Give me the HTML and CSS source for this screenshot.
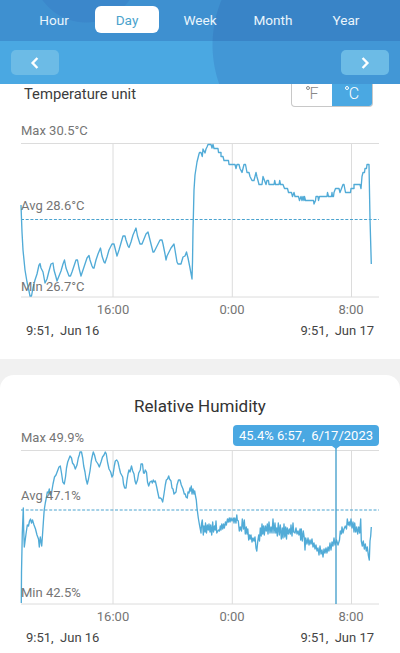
FILE: index.html
```html
<!DOCTYPE html>
<html lang="en">
<head>
    <meta charset="UTF-8">
    <meta name="viewport" content="width=device-width, initial-scale=1.0">
    <title>Temperature and Humidity</title>
    <link rel="stylesheet" href="styles.css">
</head>
<body>

    <header class="header">
        <nav class="tabs">
            <a class="tab">Hour</a>
            <a class="tab active">Day</a>
            <a class="tab">Week</a>
            <a class="tab">Month</a>
            <a class="tab">Year</a>
        </nav>
        <div class="pager">
            <button class="pager-btn" aria-label="Previous">
                <svg width="10" height="12" viewBox="0 0 10 12"><path d="M7.4 1 2.6 6l4.8 5"/></svg>
            </button>
            <button class="pager-btn" aria-label="Next">
                <svg width="10" height="12" viewBox="0 0 10 12"><path d="M2.6 1 7.4 6l-4.8 5"/></svg>
            </button>
        </div>
    </header>

    <section class="card temperature">
        <div class="unit-row">
            <span class="unit-label">Temperature unit</span>
            <div class="unit-switch">
                <span class="unit"><i class="degree"></i>F</span>
                <span class="unit selected"><i class="degree"></i>C</span>
            </div>
        </div>
        <div class="chart">
            <span class="max">Max 30.5°C</span>
            <svg class="plot" width="400" height="156" viewBox="0 143 400 156">
                <path class="grid" d="M21 143.5H379M21 297H379M113 143.5V297M232.3 143.5V297M351.5 143.5V297"/>
                <path class="avg-line" d="M21 219.5H379"/>
                <polyline class="line" points="21,205 21.5,219 22,232 23,250 25,270 27,282 29,291 30,296 31.5,296 33,288 35,280 37,274 39,265 40,263.5 41,268 43,272 45,283 47,279 49,271 51,264 53,263 54,270 56,277 57,281 59,276 61,271 63,264 64.5,260 66,268 69,276 70.5,276 72,272 74,266 76,260 77.5,260 79,268 81,276 83,270 85,264 87,258 89,255.5 90,260 92,266 93,268 94,268 96,260 98,254 100.5,248 102,256 104,262 105,263 107,257 109,250 112,244 114,244 116,252 117,256 119,250 121,243 123,236 125,236 126,240 128,246 129,247.5 131,242 133,235 136,228 137.5,236 140,244 142,244 144,239 146,234 148,232 149,236 151,244 153,252 154,252 156,248 158,244 160,240 162,240 163,244 165,254 166,260 167,256 169,252 171,248 174,244 175,250 177,262 178,264 181,264 183,257 185,256 186.5,252 188,258 190,268 192,279 192.5,262 193,230 193.3,219 194,190 195,175 197,162 199,154 199.5,152.5 201,152.5 202.3,156.5 203,149 205,153 206,149 207,147 208,144.5 211,144.5 212,148 213,144.5 214,148.5 218,148.5 218.5,152.5 221,152.5 221,156.5 223,156.5 224,160.5 228.5,160.5 229,164.5 235,164.5 236,168.5 237,164.5 239,164.5 240,168.5 242,172.5 244,164.5 245.5,164.5 247,172.5 249,172.5 250,176.5 252,180.5 254,180.5 256,172.5 257,177 258,180.5 259,184.5 262,184.5 263,176.5 264.5,180.5 266,184.5 267,180.5 268.5,180.5 269,184.5 274,184.5 274.7,180.5 275.5,184.5 279,184.5 279.7,180.5 280.5,184.5 283,184.5 284.5,188.5 287.5,188.5 288.5,192.5 291.5,192.5 292.5,196.5 294,192.5 295,196.5 298.5,196.5 299.5,200.5 301,196.5 302,200.5 303,196.5 304,200.5 304.5,196.5 305.5,200.5 313.5,200.5 314,204 315.5,200.5 316,196.5 318,196.5 318.5,200.5 319.5,196.5 327,196.5 327.5,192.5 328.5,196.5 331.5,196.5 332,192.5 332.5,196.5 333.5,196.5 334,192.5 335.5,188.5 339,188.5 340,192.5 341.5,188.5 343,184.5 344,184.5 345.5,192.5 350.5,192.5 351,188.5 354,188.5 354,184.5 360,184.5 361,188.5 362,176.5 363,172.5 364.5,172.5 365,168.5 366.5,168.5 367,164.5 369,164.5 370,219 371.3,264"/>
            </svg>
            <span class="avg">Avg 28.6°C</span>
            <span class="min">Min 26.7°C</span>
            <div class="ticks"><span>16:00</span><span>0:00</span><span>8:00</span></div>
            <div class="range"><span>9:51,&nbsp; Jun 16</span><span>9:51,&nbsp; Jun 17</span></div>
        </div>
    </section>

    <section class="card humidity">
        <h2>Relative Humidity</h2>
        <div class="chart">
            <span class="max">Max 49.9%</span>
            <svg class="plot" width="400" height="156" viewBox="0 450 400 156">
                <path class="grid" d="M21 450.5H379M21 604H379M113 450.5V604M232.3 450.5V604M351.5 450.5V604"/>
                <path class="avg-line" d="M21 510H379"/>
                <polyline class="line" points="21.3,603 21.5,573 22.3,533 23.3,508 23.7,530 24.3,547 26,534 27.3,525 28.5,526 29.5,521 30.5,519 31.5,523 32.5,520 34,525 35.5,529 37,535 38.5,539 39.3,547 40.3,537 41.7,546 42.5,535 43.3,523 44.2,510 45.3,503 46.3,498 47.3,492 48.3,493 49.3,489 50.3,495 51.5,493 53,484 54.5,477 56,475 57.5,471 59,467 60.3,466 61.5,473 62.8,482 64.3,484 65.5,477 66.5,468 67.7,462 68.5,460 70,456 71.5,458 72.5,463 74,465 75.3,469 77,465 78.3,458 79.3,455 80,452 81.5,452 82.7,458 83.7,466 85,472 86,479 87.3,484 88.5,479 90,471 91.3,461 92.3,456 93.3,452 94.5,455 96,461 98,464 99.3,467 101,462 102.5,457 104,455 105.3,452 106.3,454 107.5,462 109,469 110.7,472 112,477 113,475 114.3,466 115.3,461 116.7,460 118,462 119.3,468 120.5,473 122.7,477 123.5,484 124.7,488 126,488 127,480 128,474 129,470 130,472 131.5,466 132.7,471 134,474 135,481 136,484 137.5,480 138.7,473 140.3,470 141,464 142.5,464 143.5,473 144.5,473 145.3,470 146.5,472 147.5,482 148.7,486 150,482 151.5,481 152.3,483 153.3,480 154.3,482 155.3,481 156.7,487 157.7,492 159,498 160.5,498 161.5,499 162.7,502 164,494 165.3,485 166.3,480 167.5,479 168.7,476 169.5,479 171,481 172,488 173,489 174,494 176,492 177,485 178.5,480 180,480 181.3,485 183,489 184.3,494 185.3,494 186,497 187.3,498 188,492 189,493 190,488 190.5,491 191.3,486 192,494 193,489 194,494 194.7,491 195.5,496 196.3,500 197,508 198.3,518 199.5,525 201,533 201.5,524 202.3,520 203.3,535 204,526 205,532 205.5,523 206.5,533 207.3,525 208.3,530 209,524 210,532 210.7,525 211.7,535 212.7,522 213.5,532 214.5,526 215.3,530 216,521 216.8,533 218.5,530 219.5,531 220.3,526 221,530 221.8,524 222.7,529 223.5,524 224.3,528 225.5,522 226.3,525 227.5,519 228.3,522 229.3,518 230,522 231,518 232,521 233.3,518 234,523 234.8,518 236,523 236.8,515 237.3,520 238.3,521 239.3,531 240.3,527 241.5,531 242.3,519 243.5,529 244.3,520 245.3,534 246.3,527 247,534 247.8,529 248.7,540 249.5,535 250.3,539 251,535 252,542 253,538 254,541 255,537 256,548 256.8,551 257.8,541 258.7,535 259.5,541 260.3,528 261.2,536 262,524 262.7,534 263.5,526 264.3,535 265.3,526 266.3,531 267.3,524 268,534 269,522 270,533 271,527 272,533 273,519 274,533 275,523 275.8,533 276.7,528 277.3,536 278.3,523 279.3,535 280.3,525 281.3,539 282.3,528 283,538 284,524 284.8,537 285.7,527 286.5,539 287.3,528 288.3,534 289.3,529 290.3,534 291,525 292,536 293,523 293.7,532 295,533 296,528 297,534 298,531 299,535 300,529 300.7,540 301.3,529 302.3,541 303.3,531 304.3,538 305,550 305.7,538 307,544 308,538 309,545 310,540 311,544 312,539 313,547 314,543 315,549 316,545 317,551 318,548 319,555 320,546 321,554 322,550 323,557 324,549 325,553 326,548 327,553 328,547 329,551 330,543 331,550 332,542 333,546 334,538 335,545 336.5,540 338,545 339.5,540 340.3,531 341.3,534 342,527 343,533 344,529 345.3,526 346.5,529 347.3,519 348.3,525 349.3,522 350,526 351,519 352,528 353,522 354,532 354.7,523 355.7,532 356.7,527 357.7,534 358.7,527 359.7,533 360.7,519 361.3,541 362.3,546 363.3,541 364.3,549 365.3,544 366.3,551 367.3,547 368.3,555 369.3,560 370,541 370.7,536 371.3,527"/>
                <path class="cursor" d="M336 445V604"/>
            </svg>
            <span class="tooltip">45.4% 6:57,&nbsp; 6/17/2023</span>
            <span class="avg">Avg 47.1%</span>
            <span class="min">Min 42.5%</span>
            <div class="ticks"><span>16:00</span><span>0:00</span><span>8:00</span></div>
            <div class="range"><span>9:51,&nbsp; Jun 16</span><span>9:51,&nbsp; Jun 17</span></div>
        </div>
    </section>

</body>
</html>
```
FILE: styles.css
```css
* {
    margin: 0;
    padding: 0;
    box-sizing: border-box;
}
body {
    font-family: Roboto, "Liberation Sans", sans-serif;
    background-color: #f1f1f1;
    width: 400px;
    height: 653px;
    overflow: hidden;
}
.header {
    height: 84px;
    background:
        radial-gradient(circle at 86px -31px, #459bdc 53px, transparent 54px),
        radial-gradient(circle at 330px 45px, #4297d6 117px, transparent 118px),
        #4aa8e2;
}
.tabs {
    height: 41px;
    padding: 6px 22px 0;
    display: flex;
    gap: 9px;
    background-color: rgba(37, 90, 165, 0.3);
}
.tab {
    width: 64px;
    flex-shrink: 0;
    height: 27px;
    line-height: 28px;
    border-radius: 6px;
    color: #eaf5fc;
    font-size: 13.6px;
    text-align: center;
}
.tab.active {
    background-color: #fff;
    color: #4aa3cd;
}
.pager {
    height: 43px;
    padding: 9px 11px;
    display: flex;
    justify-content: space-between;
}
.pager-btn {
    width: 48px;
    height: 25px;
    border: none;
    border-radius: 5px;
    background-color: #6cbbe6;
    display: flex;
    align-items: center;
    justify-content: center;
}
.pager-btn path {
    fill: none;
    stroke: #fff;
    stroke-width: 2.4;
}
.card {
    background-color: #fff;
}
.temperature {
    height: 275px;
}
.humidity {
    height: 278px;
    margin-top: 16px;
    border-radius: 14px 14px 0 0;
}
.unit-row {
    height: 38px;
    padding: 0 27px 0 24px;
    display: flex;
    justify-content: space-between;
}
.unit-label {
    font-size: 14.8px;
    line-height: 20px;
    color: #3c3c3c;
}
.unit-switch {
    width: 82px;
    height: 23px;
    display: flex;
    border: 1px solid #c8c8c8;
    border-top: none;
    border-radius: 0 0 4px 4px;
    overflow: hidden;
}
.unit {
    flex: 1;
    display: flex;
    justify-content: center;
    font-size: 16px;
    font-weight: 300;
    line-height: 19px;
    color: #888;
}
.unit.selected {
    background-color: #4aa8e2;
    color: #fff;
}
.degree {
    width: 4px;
    height: 4px;
    margin-top: 2px;
    border: 1px solid currentColor;
    border-radius: 50%;
}
h2 {
    height: 54px;
    padding-top: 19px;
    font-size: 17px;
    font-weight: 400;
    line-height: 24px;
    text-align: center;
    color: #333;
}
.chart {
    position: relative;
    font-size: 13px;
    line-height: 16px;
    color: #757575;
}
.max {
    display: block;
    height: 21px;
    padding: 1px 0 0 21px;
}
.plot {
    display: block;
}
.grid {
    fill: none;
    stroke: #dcdcdc;
    stroke-width: 1;
}
.avg-line {
    stroke: #4ba3cf;
    stroke-width: 1.2;
    stroke-dasharray: 3 1.7;
}
.line {
    fill: none;
    stroke: #51abd7;
    stroke-width: 1.35;
    stroke-linejoin: round;
}
.cursor {
    stroke: #4aa3cd;
    stroke-width: 1.4;
}
/* labels that lie over the plot */
.avg, .min {
    position: absolute;
    left: 21px;
}
.avg {
    top: 76px;
}
.min {
    top: 157px;
}
.humidity .avg {
    top: 59px;
}
.humidity .min {
    top: 156px;
}
.humidity .plot {
    overflow: visible;
}
.tooltip {
    position: absolute;
    top: -4px;
    right: 21px;
    width: 146px;
    height: 21px;
    line-height: 22px;
    border-radius: 4px;
    background-color: #4aa8e2;
    color: #fff;
    text-align: center;
    white-space: nowrap;
}
.tooltip::after {
    content: "";
    position: absolute;
    top: 21px;
    left: 99px;
    border: 4px solid transparent;
    border-top: 3px solid #4aa8e2;
}
.ticks {
    display: grid;
    grid-template-columns: 119px 119px 119px;
    padding: 3px 0 0 53.5px;
    text-align: center;
}
.range {
    display: flex;
    justify-content: space-between;
    padding: 5px 26px 0;
    color: #444;
}
```
